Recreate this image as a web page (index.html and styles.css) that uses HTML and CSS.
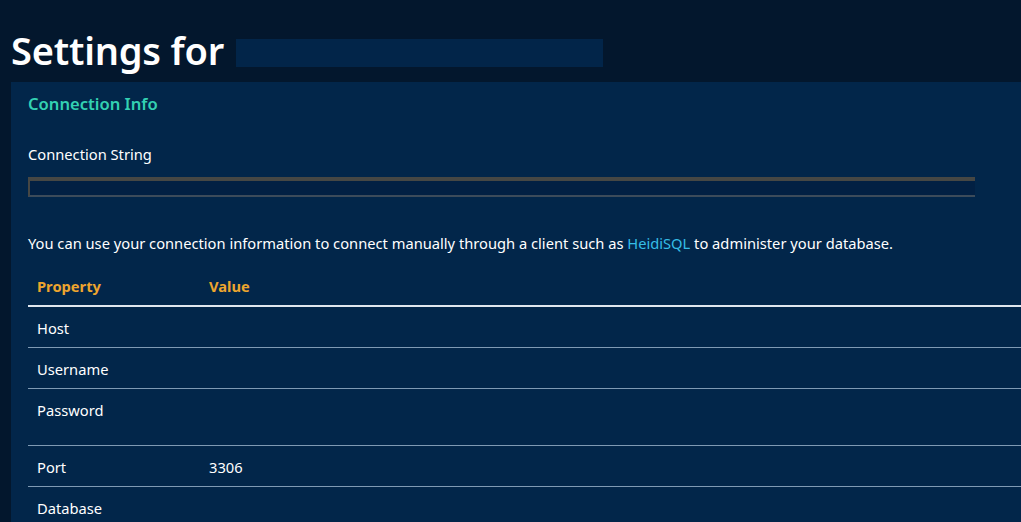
FILE: index.html
```html
<!DOCTYPE html>
<html>
<head>
<meta charset="utf-8">
<link rel="stylesheet" href="styles.css">
</head>
<body>
<header class="page-head">
  <h1 class="title">Settings for <span class="redacted"></span></h1>
</header>
<section class="panel">
  <h2 class="panel-title">Connection Info</h2>
  <div class="field">
    <label class="field-label">Connection String</label>
    <div class="conn-input"></div>
  </div>
  <p class="note">You can use your connection information to connect manually through a client such as <a class="link" href="#">HeidiSQL</a> to administer your database.</p>
  <table class="props">
    <thead>
      <tr><th class="col-prop">Property</th><th>Value</th></tr>
    </thead>
    <tbody>
      <tr><td>Host</td><td></td></tr>
      <tr><td>Username</td><td></td></tr>
      <tr class="tall"><td>Password</td><td></td></tr>
      <tr><td>Port</td><td>3306</td></tr>
      <tr><td>Database</td><td></td></tr>
    </tbody>
  </table>
</section>
</body>
</html>
```

FILE: styles.css
```css
html, body {
  margin: 0;
  padding: 0;
  background: #03172d;
  color: #ffffff;
  font-family: "Noto Sans", "Open Sans", sans-serif;
  overflow: hidden;
  height: 522px;
}
.page-head {
  height: 82px;
  padding-left: 11px;
  box-sizing: border-box;
}
.title {
  margin: 0;
  padding-top: 26px;
  font-size: 38px;
  line-height: 48px;
  font-weight: 600;
  letter-spacing: -0.2px;
  white-space: nowrap;
}
.redacted {
  display: inline-block;
  width: 367px;
  height: 28px;
  background: #022549;
  vertical-align: -2px;
  margin-left: 2px;
}
.panel {
  margin-left: 11px;
  background: #02264a;
  padding: 10px 0 20px 17px;
  min-height: 440px;
}
.panel-title {
  margin: 0;
  color: #33d1b3;
  font-size: 16.6px;
  font-weight: 600;
  line-height: 24px;
}
.field {
  margin-top: 27px;
}
.field-label {
  display: block;
  font-size: 14.7px;
  line-height: 22px;
}
.conn-input {
  margin-top: 12px;
  width: 947px;
  height: 20px;
  box-sizing: border-box;
  border-top: 4px solid #464744;
  border-left: 2px solid #464744;
  border-bottom: 2px solid #3c4b5a;
  background: #022043;
}
.note {
  margin: 35px 0 0;
  font-size: 14.7px;
  line-height: 22px;
}
.link {
  color: #35bde6;
  text-decoration: none;
}
.props {
  margin-top: 11px;
  width: 100%;
  border-collapse: collapse;
  font-size: 14.7px;
}
.props th {
  text-align: left;
  color: #eda52e;
  font-weight: 700;
  padding: 10px 9px 8px 9px;
  line-height: 22px;
  border-bottom: 2px solid #dfe6ee;
}
.props th.col-prop {
  width: 154px;
}
.props td {
  padding: 10px 9px 8px 9px;
  line-height: 22px;
  border-bottom: 1px solid #7f9ab4;
  vertical-align: top;
}
.props tr.tall td {
  padding-bottom: 24px;
}
```
